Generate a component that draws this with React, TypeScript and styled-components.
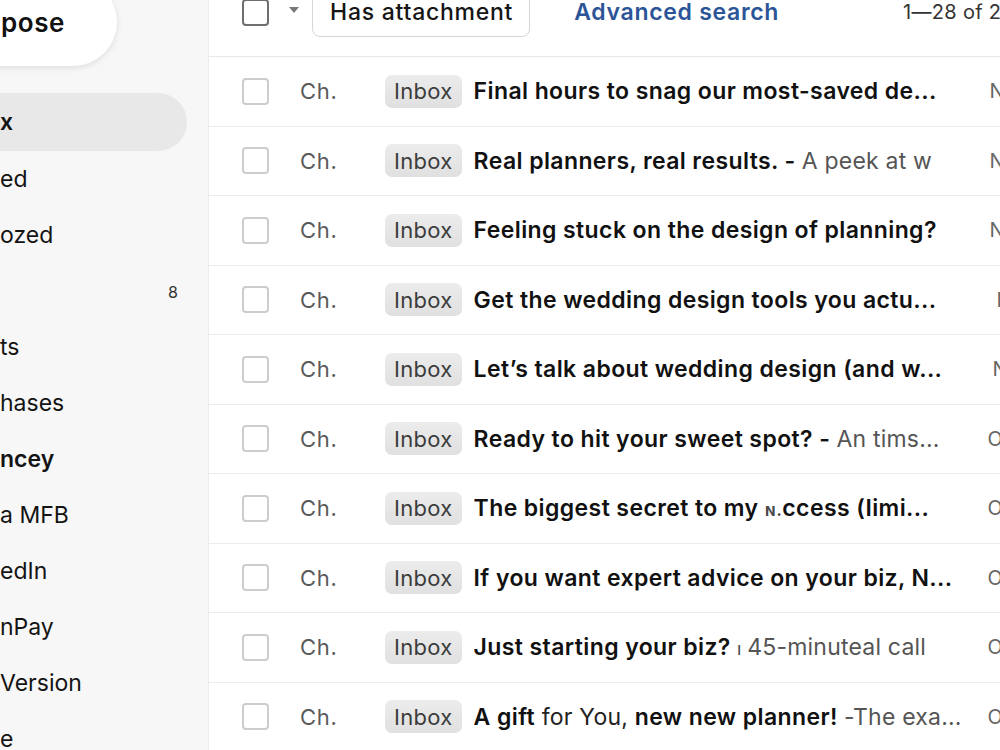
import React from "react";
import styled, { createGlobalStyle } from "styled-components";

const GlobalStyle = createGlobalStyle`
  html, body {
    margin: 0;
    padding: 0;
    background: #fff;
    overflow: hidden;
  }
  body {
    font-family: "Inter", "Liberation Sans", sans-serif;
    color: #1c1c1c;
  }
`;

const Shell = styled.div`
  display: flex;
  width: 1000px;
  height: 750px;
  overflow: hidden;
`;

const Sidebar = styled.nav`
  flex: 0 0 208px;
  background: #f7f7f7;
  border-right: 1px solid #ececec;
  display: flex;
  flex-direction: column;
`;

const Compose = styled.div`
  flex: 0 0 88px;
  width: 160px;
  margin: -22px 0 0 -43px;
  background: #fff;
  border-radius: 0 44px 44px 0;
  box-shadow: 0 2px 6px rgba(0, 0, 0, 0.1);
  display: flex;
  align-items: center;
  justify-content: flex-end;
  padding-right: 52px;
  box-sizing: border-box;
  font-size: 26px;
  font-weight: 600;
  letter-spacing: 0.6px;
  color: #111;
`;

const NavList = styled.div`
  display: flex;
  flex-direction: column;
  margin-top: 27px;
`;

const NavItem = styled.div<{ $active?: boolean; $bold?: boolean }>`
  flex: 0 0 58px;
  margin-bottom: -2px;
  width: 187px;
  display: flex;
  align-items: center;
  justify-content: space-between;
  padding-right: 9px;
  box-sizing: border-box;
  border-radius: 0 29px 29px 0;
  background: ${(p) => (p.$active ? "#e8e8e8" : "transparent")};
  font-size: 23px;
  font-weight: ${(p) => (p.$bold || p.$active ? 600 : 400)};
  color: #141414;

  &:first-child {
    margin-bottom: -1px;
  }
`;

const Count = styled.span`
  font-size: 16px;
  font-weight: 400;
  color: #333;
  margin-top: 2px;
`;

const Main = styled.main`
  flex: 0 0 860px;
  display: flex;
  flex-direction: column;
`;

const Toolbar = styled.div`
  flex: 0 0 70px;
  margin-top: -13px;
  display: flex;
  align-items: flex-start;
  padding-left: 33px;
  border-bottom: 1px solid #e8e8e8;
  box-sizing: border-box;
`;

const ToolbarGroup = styled.div`
  height: 50px;
  display: flex;
  align-items: center;
`;

const Checkbox = styled.span<{ $dark?: boolean }>`
  width: 27px;
  height: 27px;
  box-sizing: border-box;
  border: 2px solid ${(p) => (p.$dark ? "#6e6e6e" : "#cdcdcd")};
  border-radius: 4px;
  flex: 0 0 auto;
`;

const Caret = styled.span`
  width: 0;
  height: 0;
  border-left: 5px solid transparent;
  border-right: 5px solid transparent;
  border-top: 6px solid #777;
  margin: -4px 13px 0 20px;
`;

const Chip = styled.div`
  height: 50px;
  padding: 0 16px 0 17px;
  display: flex;
  align-items: center;
  border: 1px solid #d6d6d6;
  border-radius: 8px;
  font-size: 23px;
  font-weight: 500;
  letter-spacing: 0.75px;
  color: #151515;
  box-sizing: border-box;
`;

const LinkText = styled.span`
  margin-left: 44px;
  font-size: 23px;
  font-weight: 600;
  letter-spacing: 0.7px;
  color: #2b5597;
`;

const Pager = styled.span`
  margin-left: 124px;
  font-size: 20px;
  letter-spacing: 0.3px;
  color: #333;
  white-space: nowrap;
`;

const Row = styled.div`
  flex: 0 0 69.5px;
  display: flex;
  align-items: center;
  padding-left: 33px;
  border-bottom: 1px solid #ececec;
  box-sizing: border-box;
  white-space: nowrap;
`;

const Sender = styled.span`
  width: 85px;
  margin-left: 31px;
  font-size: 22px;
  letter-spacing: 0.7px;
  color: #5a5a5a;
  flex: 0 0 auto;
`;

const Label = styled.span`
  height: 33px;
  padding: 0 9px;
  display: inline-flex;
  align-items: center;
  border-radius: 7px;
  background: linear-gradient(#ececec, #e0e0e0);
  font-size: 22px;
  letter-spacing: 0.3px;
  color: #3c3c3c;
  flex: 0 0 auto;
`;

const Subject = styled.div`
  width: 492px;
  margin-left: 12px;
  overflow: hidden;
  font-size: 23px;
  letter-spacing: 0.4px;
  flex: 0 0 auto;
`;

const Strong = styled.span`
  font-weight: 600;
  color: #111;
`;

const Snippet = styled.span<{ $dark?: boolean }>`
  font-weight: 400;
  letter-spacing: 0.2px;
  color: ${(p) => (p.$dark ? "#222" : "#555")};
`;

const Odd = styled.span`
  font-size: 18px;
  color: #4a4a4a;
`;

const DateCell = styled.span<{ $offset?: number }>`
  width: 90px;
  margin-left: 22px;
  padding-left: ${(p) => p.$offset ?? 0}px;
  font-size: 20px;
  color: #666;
  flex: 0 0 auto;
`;

type Mail = { subject: React.ReactNode; date: string; offset?: number };

const mails: Mail[] = [
  { subject: <Strong>Final hours to snag our most-saved de...</Strong>, date: "Nov 12", offset: 2 },
  {
    subject: (
      <>
        <Strong>Real planners, real results. - </Strong>
        <Snippet>A peek at w</Snippet>
      </>
    ),
    date: "Nov 10",
    offset: 2,
  },
  { subject: <Strong>Feeling stuck on the design of planning?</Strong>, date: "Nov 6", offset: 2 },
  { subject: <Strong>Get the wedding design tools you actu...</Strong>, date: "Nov 3", offset: 9 },
  { subject: <Strong>Let’s talk about wedding design (and w...</Strong>, date: "Nov 1", offset: 5 },
  {
    subject: (
      <>
        <Strong>Ready to hit your sweet spot? - </Strong>
        <Snippet>An tims...</Snippet>
      </>
    ),
    date: "Oct 30",
  },
  {
    subject: (
      <Strong>
        The biggest secret to my <Odd>ɴ.</Odd>ccess (Iimi...
      </Strong>
    ),
    date: "Oct 28",
  },
  { subject: <Strong>If you want expert advice on your biz, N...</Strong>, date: "Oct 27" },
  {
    subject: (
      <>
        <Strong>Just starting your biz? </Strong>
        <Odd>ı </Odd>
        <Snippet>45-minuteal call</Snippet>
      </>
    ),
    date: "Oct 25",
  },
  {
    subject: (
      <>
        <Strong>A gift</Strong>
        <Snippet $dark> for You, </Snippet>
        <Strong>new new planner! </Strong>
        <Snippet>-The exa...</Snippet>
      </>
    ),
    date: "Oct 23",
  },
];

const nav = [
  { label: "x", active: true },
  { label: "ed" },
  { label: "ozed" },
  { label: "", count: "8" },
  { label: "ts" },
  { label: "hases" },
  { label: "ncey", bold: true },
  { label: "a MFB" },
  { label: "edIn" },
  { label: "nPay" },
  { label: "Version" },
  { label: "e" },
];

export default function App() {
  return (
    <>
      <GlobalStyle />
      <Shell>
        <Sidebar>
          <Compose>pose</Compose>
          <NavList>
            {nav.map((n, i) => (
              <NavItem key={i} $active={n.active} $bold={n.bold}>
                <span>{n.label}</span>
                {n.count && <Count>{n.count}</Count>}
              </NavItem>
            ))}
          </NavList>
        </Sidebar>
        <Main>
          <Toolbar>
            <ToolbarGroup>
              <Checkbox $dark />
              <Caret />
              <Chip>Has attachment</Chip>
              <LinkText>Advanced search</LinkText>
              <Pager>1—28 of 29</Pager>
            </ToolbarGroup>
          </Toolbar>
          {mails.map((m, i) => (
            <Row key={i}>
              <Checkbox />
              <Sender>Ch.</Sender>
              <Label>Inbox</Label>
              <Subject>{m.subject}</Subject>
              <DateCell $offset={m.offset}>{m.date}</DateCell>
            </Row>
          ))}
        </Main>
      </Shell>
    </>
  );
}
